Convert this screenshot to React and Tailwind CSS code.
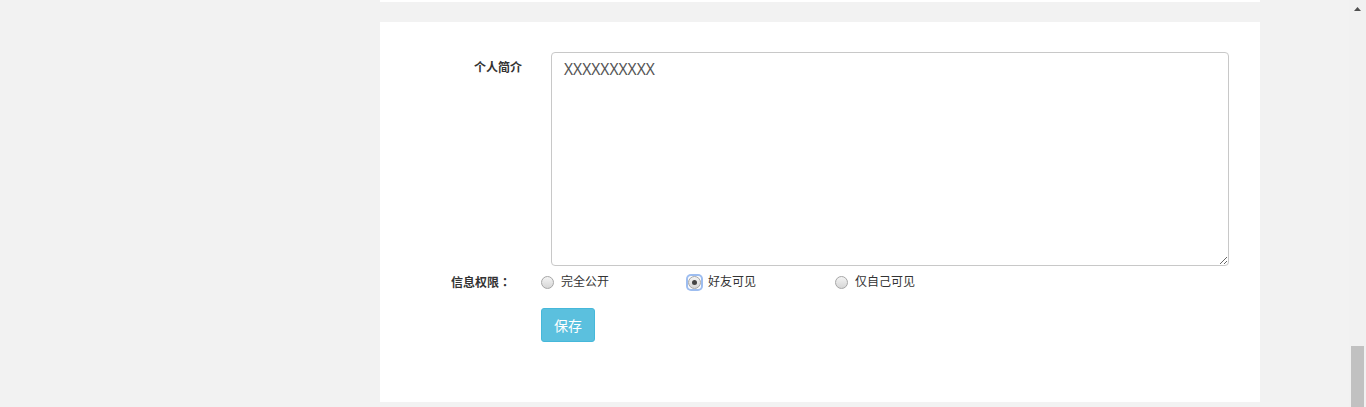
import React, { useState } from 'react';

const options = [
  { value: 'public', label: '完全公开' },
  { value: 'friends', label: '好友可见' },
  { value: 'private', label: '仅自己可见' }
];

const Radio = ({ checked, label, onClick }) => (
  <button type="button" onClick={onClick} className="flex items-center w-[147px] text-left">
    <span
      className={`flex items-center justify-center w-[13px] h-[13px] rounded-[3px] ${
        checked ? 'shadow-[0_0_0_2px_#9dbdf0]' : ''
      }`}
    >
      <span className="flex items-center justify-center w-[13px] h-[13px] rounded-full border border-[#a6a6a6] bg-gradient-to-b from-[#f4f4f4] to-[#d6d6d6]">
        {checked && <span className="w-[5px] h-[5px] rounded-full bg-[#444]" />}
      </span>
    </span>
    <span className="ml-[7px] text-[12px] text-[#333]">{label}</span>
  </button>
);

export default function App() {
  const [scope, setScope] = useState('friends');

  return (
    <div
      className="flex h-[407px] bg-[#f2f2f2] overflow-hidden"
      style={{ fontFamily: '"Noto Sans", "Noto Sans CJK SC", sans-serif' }}
    >
      <div className="flex-1">
        <div className="ml-[380px] w-[880px] h-[2px] bg-white" />
        <div className="ml-[380px] mt-[20px] w-[880px] h-[380px] bg-white pt-[30px]">
          {/* 个人简介 */}
          <div className="flex">
            <label className="w-[142px] pt-[7px] text-right text-[12px] font-bold text-[#333] leading-[18px]">
              个人简介
            </label>
            <textarea
              defaultValue="XXXXXXXXXX"
              className="ml-[29px] w-[678px] h-[214px] border border-[#c8c8c8] rounded-[4px] px-3 pt-[5px] text-[15.5px] text-[#555] leading-[22px] outline-none"
            />
          </div>

          {/* 信息权限 */}
          <div className="flex items-center mt-[6px] h-[20px]">
            <label className="ml-[71px] w-[90px] text-[12px] font-bold text-[#333]">
              信息权限<span style={{ fontFamily: '"Noto Sans CJK TC", sans-serif' }}>：</span>
            </label>
            {options.map(o => (
              <Radio
                key={o.value}
                label={o.label}
                checked={scope === o.value}
                onClick={() => setScope(o.value)}
              />
            ))}
          </div>

          <button
            type="button"
            className="ml-[161px] mt-[16px] w-[54px] h-[34px] rounded-[3px] bg-[#5bc0de] border border-[#46b8da] text-white text-[14px]"
          >
            保存
          </button>
        </div>
      </div>

      {/* scrollbar */}
      <div className="w-[17px] flex flex-col justify-between bg-[#f1f1f1]">
        <div className="flex justify-center pt-[7px]">
          <svg width="7" height="4" viewBox="0 0 7 4">
            <path d="M3.5 0L7 4H0z" fill="#505050" />
          </svg>
        </div>
        <div className="mx-[2px] h-[61px] bg-[#c1c1c1]" />
      </div>
    </div>
  );
}
